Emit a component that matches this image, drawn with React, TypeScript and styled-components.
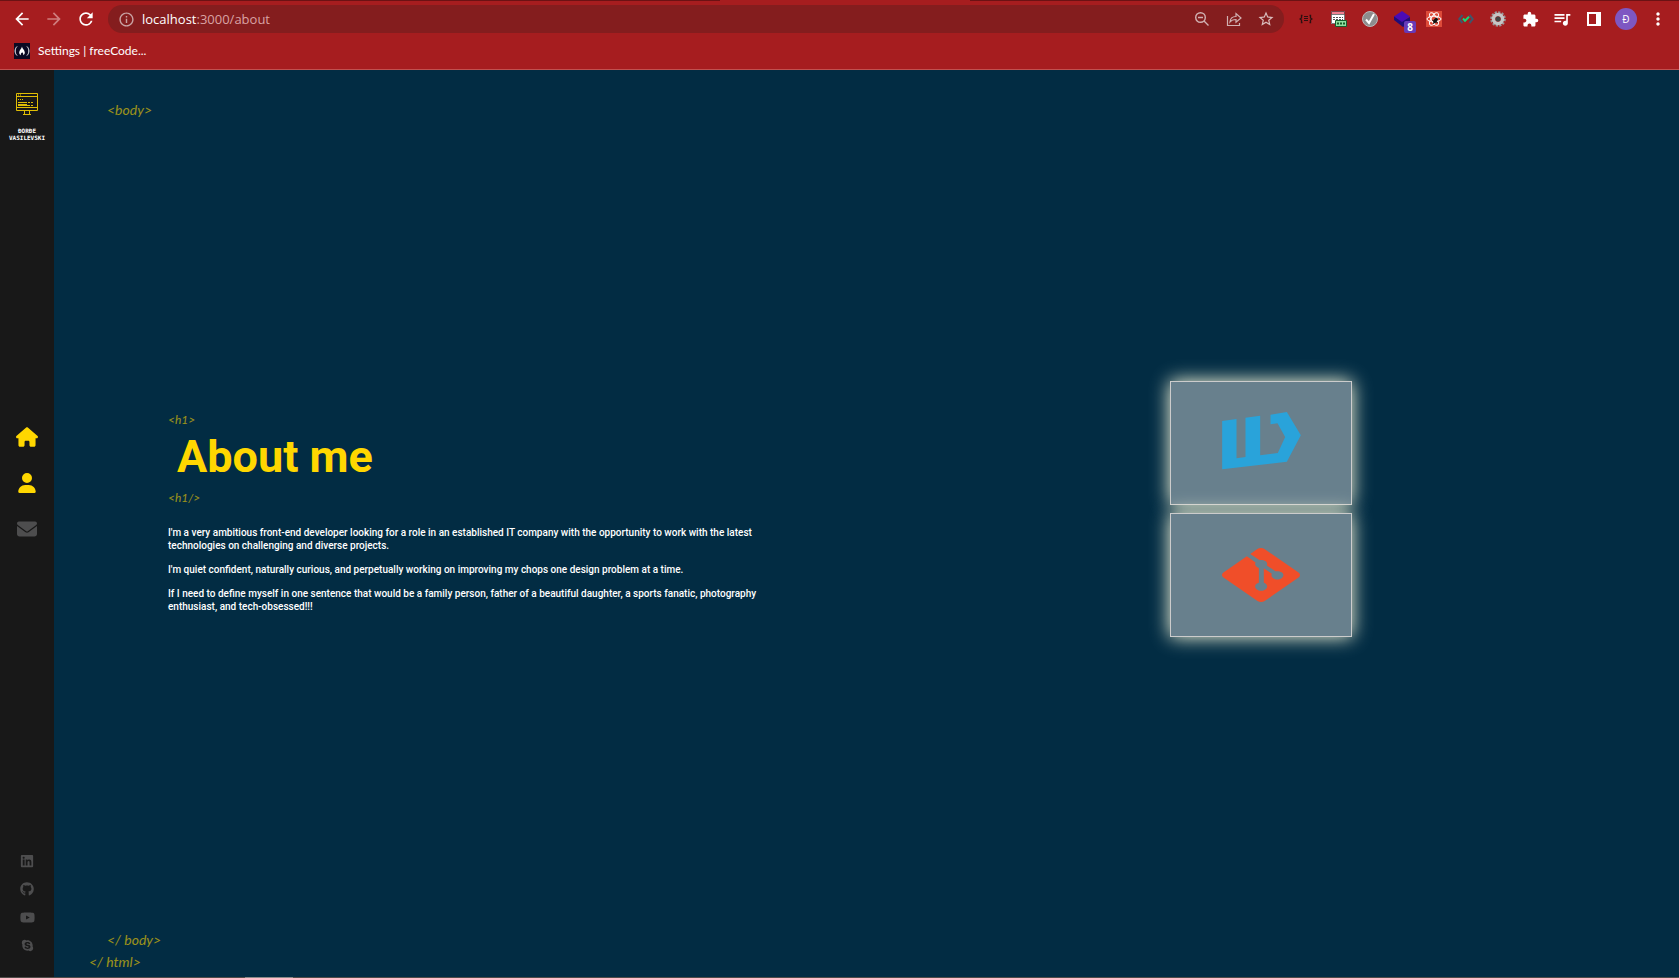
import React from "react";
import styled, { createGlobalStyle } from "styled-components";
import { FaLinkedin, FaGithub, FaYoutube, FaSkype } from "react-icons/fa";
import { FaHouse, FaUser, FaEnvelope } from "react-icons/fa6";
import { SiGit } from "react-icons/si";
import {
  MdArrowBack, MdArrowForward, MdRefresh, MdInfoOutline, MdOutlineStarBorder, MdExtension,
  MdMoreVert, MdOutlineQueueMusic,
} from "react-icons/md";

const ui = `"Open Sans", "Noto Sans", sans-serif`;
const sans = `Roboto, "Liberation Sans", Arial, sans-serif`;

const GlobalStyle = createGlobalStyle`
  * { box-sizing: border-box; }
  body { margin: 0; background: #022c43; }
  button { border: 0; padding: 0; background: none; color: inherit; }
  a { color: inherit; text-decoration: none; }
  svg { display: block; }
`;

const Window = styled.div`
  display: flex;
  flex-direction: column;
  min-height: 100vh;
  font-family: ${ui};
`;
const Chrome = styled.header`
  background: #a61d1f;
  border-bottom: 1px solid #c1514f;
  color: #fff;
`;
const TabEdge = styled.div`
  height: 1px;
  display: grid;
  grid-template-columns: 720fr 250fr 709fr;
  background: #6b1214;
`;
const ActiveTab = styled.div`
  grid-column: 2;
  background: #a61d1f;
`;
const Toolbar = styled.div`
  display: flex;
  align-items: center;
  padding: 4px 5px 4px 6px;
`;
const IconButton = styled.button<{ $tone?: string }>`
  position: relative;
  flex: none;
  width: 32px;
  height: 28px;
  display: flex;
  align-items: center;
  justify-content: center;
  color: ${(p) => p.$tone ?? "#fff"};
`;
const AddressBar = styled.div`
  flex: 1;
  min-width: 0;
  height: 28px;
  margin: 0 6px;
  padding: 0 2px;
  display: flex;
  align-items: center;
  border-radius: 14px;
  background: #841d1e;
`;
const Address = styled.div`
  flex: 1;
  font-size: 13px;
  line-height: 20px;
  color: #d9a3a4;
  b { font-weight: 400; color: #fff; }
`;
const Count = styled.span`
  position: absolute;
  right: 2px;
  bottom: 0;
  width: 12px;
  height: 12px;
  border-radius: 2px;
  background: #673ab7;
  font: 700 10px/12px ${ui};
`;
const Avatar = styled.span`
  width: 22px;
  height: 22px;
  border-radius: 50%;
  background: #7e57c2;
  font: 10px/22px ${ui};
`;
const Bookmarks = styled.nav`
  height: 32px;
  padding: 0 14px 4px;
  display: flex;
  align-items: center;
`;
const Bookmark = styled.a`
  display: flex;
  align-items: center;
  gap: 8px;
  font-family: Lato, sans-serif;
  font-size: 12px;
  line-height: 16px;
`;

const Page = styled.div`
  flex: 1;
  display: flex;
`;
const Taskbar = styled.div`
  height: 1px;
  display: grid;
  grid-template-columns: 245fr 48fr 1386fr;
  background: #4f4c49;
`;
const ActiveTask = styled.div`
  grid-column: 2;
  background: #8a8a88;
`;
const Sidebar = styled.aside`
  flex: none;
  width: 54px;
  padding: 23px 0 24px;
  display: flex;
  flex-direction: column;
  align-items: center;
  background: #181818;
`;
const Brand = styled.a`
  display: flex;
  flex-direction: column;
  align-items: center;
  gap: 12px;
  color: #fff;
  font: 700 6px/7px "DejaVu Sans Mono", monospace;
  text-align: center;
`;
const MainNav = styled.nav`
  margin: auto 0;
  padding-bottom: 28px;
  display: flex;
  flex-direction: column;
  gap: 24px;
`;
const Social = styled.nav`
  display: flex;
  flex-direction: column;
  gap: 12px;
`;
const SideLink = styled.a<{ $active?: boolean; $small?: boolean }>`
  display: flex;
  justify-content: center;
  align-items: center;
  height: ${(p) => (p.$small ? 16 : 22)}px;
  color: ${(p) => (p.$active ? "#ffd700" : "#4d4d4e")};
`;

const Main = styled.main`
  flex: 1;
  display: flex;
  flex-direction: column;
  padding: 29px 36px 4px 35px;
`;
const Tag = styled.span<{ $indent?: number; $small?: boolean }>`
  display: block;
  margin-left: ${(p) => p.$indent ?? 0}px;
  font-family: Lato, sans-serif;
  font-style: italic;
  font-size: ${(p) => (p.$small ? 12 : 14)}px;
  line-height: ${(p) => (p.$small ? 18 : 22)}px;
  color: #ffd700;
  opacity: 0.6;
`;
const About = styled.div`
  flex: 1;
  display: grid;
  grid-template-columns: 711fr 764fr;
  align-items: center;
  margin-left: 79px;
  padding-bottom: 32px;
`;
const Copy = styled.section`
  max-width: 600px;
  padding-top: 5px;
  font-family: ${sans};
  color: #fff;
`;
const Title = styled.h1`
  margin: 0 0 5px 9px;
  font-size: 45px;
  line-height: 55px;
  font-weight: 700;
  color: #ffd700;
`;
const Text = styled.div`
  display: flex;
  flex-direction: column;
  gap: 11px;
  margin-top: 19px;
  p {
    margin: 0;
    font-size: 10px;
    line-height: 13px;
    font-weight: 500;
  }
`;
const Stack = styled.section`
  display: flex;
  flex-direction: column;
  align-items: center;
  gap: 8px;
`;
const Face = styled.div`
  width: 182px;
  height: 124px;
  display: flex;
  align-items: center;
  justify-content: center;
  border: 1px solid #ccc;
  background: #68808d;
  box-shadow: 0 0 18px lightyellow;
`;
const GitMark = styled(SiGit)`
  flex: none;
  width: 78px;
  height: 54px;
  color: #f04e29;
`;
const Svg = styled.svg`
  flex: none;
`;

const ZoomOut = () => (
  <Svg width="16" height="16" viewBox="0 0 16 16" fill="none" stroke="currentColor" strokeWidth="1.4">
    <circle cx="6.5" cy="6.5" r="4.8" /><path d="M10 10l4.5 4.5M4 6.5h5" />
  </Svg>
);
const Share = () => (
  <Svg width="16" height="16" viewBox="0 0 16 16" fill="none" stroke="currentColor" strokeWidth="1.2">
    <path d="M1.5 5v9.500h12V12M4 11c.3-4 2.500-5.500 6-5.500V2.500L15 7l-5 4.300V8.500C7 8.500 5.500 9 4 11z" />
  </Svg>
);
const Panel = () => (
  <Svg width="14" height="14" viewBox="0 0 14 14">
    <path fill="currentColor" fillRule="evenodd" d="M0 0h14v14H0zM2 2v10h7V2z" />
  </Svg>
);
const Braces = () => (
  <Svg width="14" height="12" viewBox="0 0 14 12" fill="none" stroke="#2b1011">
    <path strokeWidth="1.3" d="M3.500 2.500h-1v2.500L1 6l1.500 1v2.500h1M10.500 2.500h1v2.500L13 6l-1.500 1v2.500h-1" />
    <path d="M5 3.500h4M5 5.500h4M5 7.500h4" />
  </Svg>
);
const CssPage = () => (
  <Svg width="17" height="16" viewBox="0 0 17 16">
    <path fill="#fff" d="M1 0h14v13H1z" /><path fill="#f08090" d="M1 0h14v3H1z" />
    <path fill="none" stroke="#222" strokeWidth=".6" d="M1.500 .5h13v12h-13zM1.500 3.500h13" />
    <path stroke="#555" strokeDasharray="2 1" d="M3 6.500h10M3 8.500h10" />
    <path fill="#8fe0a0" stroke="#185c2a" d="M5.500 9.500h11v6h-11z" />
    <path stroke="#185c2a" strokeWidth="2" strokeDasharray="2 1" d="M7 12.500h8" />
  </Svg>
);
const CheckBall = () => (
  <Svg width="16" height="16" viewBox="0 0 16 16">
    <circle cx="8" cy="8" r="7.500" fill="#8d8d8d" stroke="#b9b9b9" />
    <path d="M4 8.500l3 3.500 5-9" fill="none" stroke="#fff" strokeWidth="2" />
  </Svg>
);
const Layers = () => (
  <Svg width="16" height="16" viewBox="0 0 16 16">
    <path fill="#1f0d78" d="M0 5l8 5 8-4v5l-7 5-9-7z" /><path fill="#4b0bb5" d="M8 0l8 5.500L8 11 0 5.500z" />
  </Svg>
);
const ReactBug = () => (
  <Svg width="16" height="16" viewBox="0 0 16 16">
    <path fill="#dd4b39" d="M0 0h16v16H0z" />
    <g fill="none" stroke="#fff">
      <ellipse cx="8" cy="8" rx="7" ry="2.800" />
      <ellipse cx="8" cy="8" rx="7" ry="2.800" transform="rotate(60 8 8)" />
      <ellipse cx="8" cy="8" rx="7" ry="2.800" transform="rotate(120 8 8)" />
    </g>
    <ellipse cx="9.500" cy="9.500" rx="1.800" ry="3" fill="#111" transform="rotate(35 9.500 9.500)" />
    <path stroke="#111" strokeWidth=".8" d="M6 9l6 3M7 13l5-5" />
  </Svg>
);
const CodeCheck = () => (
  <Svg width="16" height="12" viewBox="0 0 16 12" fill="none" strokeWidth="2">
    <path stroke="#3f566b" d="M4.500 2L1.200 6l3.300 4M11.500 2l3.300 4-3.300 4" />
    <path stroke="#10d97a" d="M5 5.500l2 2.200 4-4" />
  </Svg>
);
const Cog = () => (
  <Svg width="16" height="16" viewBox="0 0 16 16">
    <circle cx="8" cy="8" r="6.800" fill="none" stroke="#999" strokeWidth="2" strokeDasharray="2.200 1.360" />
    <circle cx="8" cy="8" r="4.500" fill="none" stroke="#c5c5c5" strokeWidth="3.500" />
    <circle cx="8" cy="8" r="2.500" fill="#444" />
  </Svg>
);
const CampMark = () => (
  <Svg width="16" height="16" viewBox="0 0 16 16">
    <path fill="#0a0a23" d="M0 0h16v16H0z" />
    <path fill="none" stroke="#fff" d="M3 3.500C.5 6 .5 10 3 12.500M13 3.500c2.500 2.500 2.500 6.500 0 9" />
    <path fill="#fff" d="M8 3.500c0 2 2.800 3.500 2.800 6 0 1.300-.8 2.300-1.800 2.800.6-1.300.2-2-.8-3-1 1-1.800 1.500-1.200 3-1.200-.5-1.800-1.500-1.800-2.800C5.200 7.200 7.500 6 8 3.500z" />
  </Svg>
);
const Monitor = () => (
  <Svg width="22" height="22" viewBox="0 0 22 22" fill="none" stroke="#e0be05">
    <path d="M.5.5h21v17H.5zM.5 3.500h21M.5 14.500h21M8.500 18v3M13.500 18v3M7 21.500h8" />
    <path strokeDasharray="1 1" d="M2 6.500h6M2 2h4" />
    <path d="M2 9.500h7M2 11.500h9M2 12.500h11" />
    <path strokeDasharray="2 1" d="M9 9.500h8M12 12.500h6" />
  </Svg>
);
const WebMark = () => (
  <Svg width="79" height="62" viewBox="0 0 236 186">
    <path fill="#29a3da" d="M0 27L43 21V139L70 135V17L114 11V130L167 123L189 75L166 34L145 37V8L194 0L236 70L194 149L0 172Z" />
  </Svg>
);

export default function App() {
  return (
    <Window>
      <GlobalStyle />
      <Chrome>
        <TabEdge><ActiveTab /></TabEdge>
        <Toolbar>
          <IconButton aria-label="Back"><MdArrowBack size={20} /></IconButton>
          <IconButton aria-label="Forward" $tone="#cf7d7e"><MdArrowForward size={20} /></IconButton>
          <IconButton aria-label="Reload"><MdRefresh size={20} /></IconButton>
          <AddressBar>
            <IconButton aria-label="Site information" $tone="#c9a3a4"><MdInfoOutline size={17} /></IconButton>
            <Address><b>localhost</b>:3000/about</Address>
            <IconButton aria-label="Zoom" $tone="#d1b1b2"><ZoomOut /></IconButton>
            <IconButton aria-label="Share" $tone="#d1b1b2"><Share /></IconButton>
            <IconButton aria-label="Bookmark this page" $tone="#d9bdbd"><MdOutlineStarBorder size={18} /></IconButton>
          </AddressBar>
          <IconButton aria-label="JSON viewer"><Braces /></IconButton>
          <IconButton aria-label="CSS viewer"><CssPage /></IconButton>
          <IconButton aria-label="Checker"><CheckBall /></IconButton>
          <IconButton aria-label="Layers"><Layers /><Count>8</Count></IconButton>
          <IconButton aria-label="React tools"><ReactBug /></IconButton>
          <IconButton aria-label="Code check"><CodeCheck /></IconButton>
          <IconButton aria-label="Options"><Cog /></IconButton>
          <IconButton aria-label="Extensions"><MdExtension size={17} /></IconButton>
          <IconButton aria-label="Media"><MdOutlineQueueMusic size={20} /></IconButton>
          <IconButton aria-label="Side panel"><Panel /></IconButton>
          <IconButton aria-label="Profile"><Avatar>Đ</Avatar></IconButton>
          <IconButton aria-label="Menu"><MdMoreVert size={20} /></IconButton>
        </Toolbar>
        <Bookmarks aria-label="Bookmarks">
          <Bookmark href="#settings"><CampMark />Settings | freeCode...</Bookmark>
        </Bookmarks>
      </Chrome>
      <Page>
        <Sidebar>
          <Brand href="#home"><Monitor /><span>ĐORĐE<br />VASILEVSKI</span></Brand>
          <MainNav aria-label="Main">
            <SideLink href="#home" aria-label="Home" $active><FaHouse size={22} /></SideLink>
            <SideLink href="#about" aria-label="About" $active><FaUser size={20} /></SideLink>
            <SideLink href="#contact" aria-label="Contact"><FaEnvelope size={20} /></SideLink>
          </MainNav>
          <Social aria-label="Social">
            <SideLink href="#linkedin" aria-label="LinkedIn" $small><FaLinkedin size={14} /></SideLink>
            <SideLink href="#github" aria-label="GitHub" $small><FaGithub size={14} /></SideLink>
            <SideLink href="#youtube" aria-label="YouTube" $small><FaYoutube size={15} /></SideLink>
            <SideLink href="#skype" aria-label="Skype" $small><FaSkype size={13} /></SideLink>
          </Social>
        </Sidebar>
        <Main>
          <Tag $indent={18}>&lt;body&gt;</Tag>
          <About>
            <Copy>
              <Tag $small>&lt;h1&gt;</Tag>
              <Title>About me</Title>
              <Tag $small>&lt;h1/&gt;</Tag>
              <Text>
                <p>I'm a very ambitious front-end developer looking for a role in an established IT company with the opportunity to work with the latest technologies on challenging and diverse projects.</p>
                <p>I'm quiet confident, naturally curious, and perpetually working on improving my chops one design problem at a time.</p>
                <p>If I need to define myself in one sentence that would be a family person, father of a beautiful daughter, a sports fanatic, photography enthusiast, and tech-obsessed!!!</p>
              </Text>
            </Copy>
            <Stack aria-label="Skills">
              <Face><WebMark /></Face>
              <Face><GitMark preserveAspectRatio="none" /></Face>
            </Stack>
          </About>
          <Tag $indent={18}>&lt;/ body&gt;</Tag>
          <Tag>&lt;/ html&gt;</Tag>
        </Main>
      </Page>
      <Taskbar><ActiveTask /></Taskbar>
    </Window>
  );
}
